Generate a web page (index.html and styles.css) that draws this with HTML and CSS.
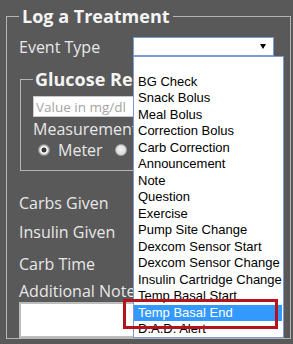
FILE: index.html
```html
<!DOCTYPE html>
<html>
<head>
<meta charset="utf-8">
<link rel="stylesheet" href="styles.css">
</head>
<body>
<fieldset class="panel">
  <legend class="panel-title">Log a Treatment</legend>
  <div class="row row-event">
    <span class="label">Event Type</span>
    <div class="select"><span class="caret"></span></div>
  </div>
  <fieldset class="sub">
    <legend class="sub-title">Glucose Reading</legend>
    <div class="field"><input class="text-input" type="text" placeholder="Value in mg/dl"></div>
    <div class="label measure">Measurement Method</div>
    <div class="radios">
      <span class="radio checked"></span><span class="label">Meter</span>
      <span class="radio"></span><span class="label">Sensor</span>
    </div>
  </fieldset>
  <div class="row row-carbs"><span class="label">Carbs Given</span></div>
  <div class="row row-insulin"><span class="label">Insulin Given</span></div>
  <div class="row row-time"><span class="label">Carb Time</span></div>
  <div class="label notes-label">Additional Notes</div>
  <div class="notes"></div>
</fieldset>

<div class="listbox">
  <div class="opt"></div>
  <div class="opt">BG Check</div>
  <div class="opt">Snack Bolus</div>
  <div class="opt">Meal Bolus</div>
  <div class="opt">Correction Bolus</div>
  <div class="opt">Carb Correction</div>
  <div class="opt">Announcement</div>
  <div class="opt">Note</div>
  <div class="opt">Question</div>
  <div class="opt">Exercise</div>
  <div class="opt">Pump Site Change</div>
  <div class="opt">Dexcom Sensor Start</div>
  <div class="opt">Dexcom Sensor Change</div>
  <div class="opt">Insulin Cartridge Change</div>
  <div class="opt">Temp Basal Start</div>
  <div class="opt selected">Temp Basal End</div>
  <div class="opt">D.A.D. Alert</div>
</div>
<div class="callout"></div>
</body>
</html>
```

FILE: styles.css
```css
html, body {
  margin: 0;
  padding: 0;
  background: #595959;
  height: 100%;
  overflow: hidden;
}
body {
  padding-top: 4px;
  font-family: "Open Sans", "Noto Sans", sans-serif;
  color: #e8e8e8;
}
.panel {
  margin: 0 2px 0 6px;
  padding: 0 12px;
  border: 1px solid #b5b5b5;
  min-width: 0;
}
.panel-title, .sub-title {
  padding: 0 3px;
  margin-left: 0;
  font-weight: 700;
  font-size: 18px;
  line-height: 24px;
  color: #f4f4f4;
}
.sub-title {
  padding: 0 2px;
}
.label {
  font-size: 16px;
  line-height: 22px;
  white-space: nowrap;
}
.row {
  display: flex;
  align-items: center;
}
.row-event {
  margin-top: 9px;
  height: 19px;
}
.row-event .label {
  width: 114px;
}
.select {
  position: relative;
  width: 141px;
  height: 19px;
  box-sizing: border-box;
  border: 1px solid #7c9bd1;
  background: #fff;
}
.caret {
  position: absolute;
  right: 7px;
  top: 6px;
  width: 0;
  height: 0;
  border-left: 3.5px solid transparent;
  border-right: 3.5px solid transparent;
  border-top: 5px solid #000;
}
.sub {
  margin: 11px 0 0 1px;
  padding: 0 12px 10px;
  border: 1px solid #b5b5b5;
  min-width: 0;
}
.field {
  margin-top: 5px;
}
.text-input {
  display: block;
  box-sizing: border-box;
  width: 230px;
  height: 21px;
  margin: 0;
  padding: 0 2px;
  border: 1px solid #c9c9c9;
  background: #fff;
  font-family: "Open Sans", sans-serif;
  font-size: 13.5px;
  outline: none;
}
.text-input::placeholder {
  color: #a4a4a4;
}
.measure {
  margin-top: 1px;
}
.radios {
  display: flex;
  align-items: center;
  height: 20px;
  padding-left: 5px;
}
.radio {
  width: 12px;
  height: 12px;
  box-sizing: border-box;
  border-radius: 50%;
  border: 1px solid #a5a5a5;
  background: radial-gradient(circle at 50% 40%, #f4f4f4, #cfcfcf);
  margin-right: 8px;
  flex: none;
}
.radio.checked {
  background: radial-gradient(circle, #3a3a3a 0 2.2px, #f6f6f6 2.8px 3.6px, #c8c8c8 4.2px);
  border-color: #8c8c8c;
}
.radios .label + .radio {
  margin-left: 12px;
}
.row-carbs {
  margin-top: 19px;
  height: 25px;
}
.row-insulin {
  height: 33px;
}
.row-time {
  height: 32px;
}
.notes-label {
  height: 22px;
}
.notes {
  box-sizing: border-box;
  width: 240px;
  height: 36px;
  border: 2px solid #bdbdbd;
  background: #fff;
}
.listbox {
  position: absolute;
  left: 133px;
  top: 56px;
  width: 151px;
  height: 282px;
  box-sizing: border-box;
  border: 1px solid #7f9bcc;
  background: #fff;
  font-family: "Liberation Sans", Arial, sans-serif;
  font-size: 13px;
  color: #000;
  overflow: hidden;
}
.opt {
  height: 16.5px;
  line-height: 16.5px;
  padding-left: 4px;
  white-space: nowrap;
}
.opt.selected {
  background: #3399ff;
  color: #fff;
  margin-right: 1px;
}
.callout {
  position: absolute;
  left: 123px;
  top: 299px;
  width: 155px;
  height: 30px;
  box-sizing: border-box;
  border: 3px solid #b3141b;
}
```
